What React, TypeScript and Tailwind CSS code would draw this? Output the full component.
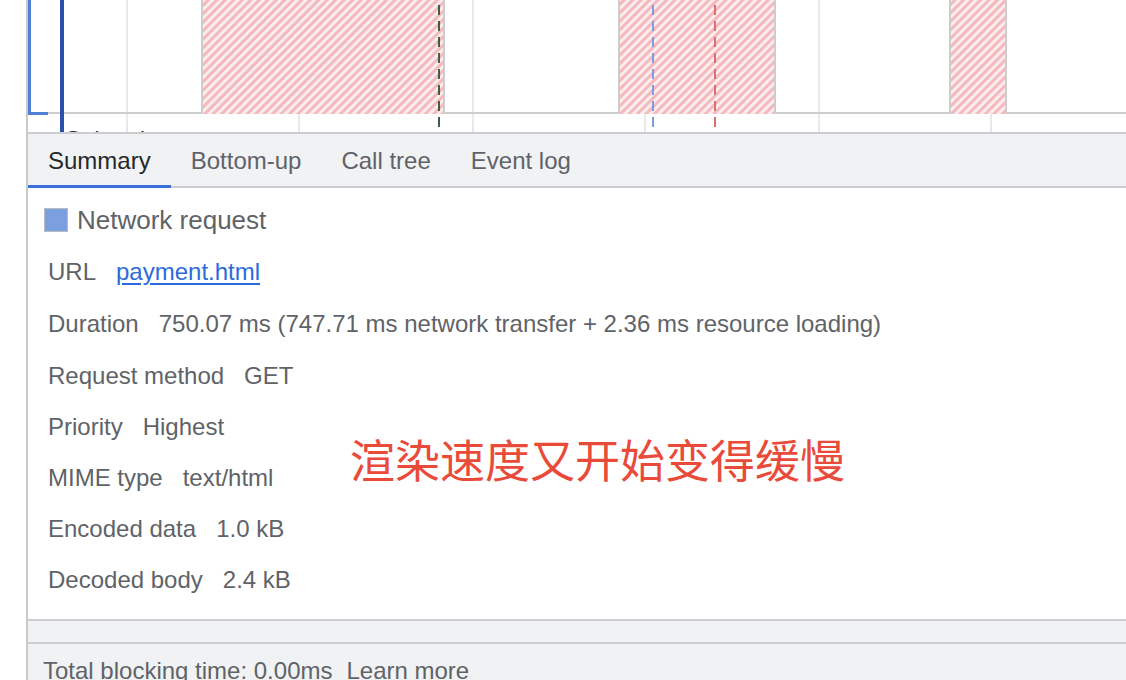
import React from "react"

const font = { fontFamily: '"Liberation Sans", Arial, sans-serif' }

const tabs = ["Summary", "Bottom-up", "Call tree", "Event log"]

const rows: { label: string; value: React.ReactNode; h: string }[] = [
  {
    label: "URL",
    value: (
      <span className="text-[#2d6bdc] underline underline-offset-[3px] decoration-[1.5px]">
        payment.html
      </span>
    ),
    h: "h-[52px]",
  },
  {
    label: "Duration",
    value: "750.07 ms (747.71 ms network transfer + 2.36 ms resource loading)",
    h: "h-[52px]",
  },
  { label: "Request method", value: "GET", h: "h-[51px]" },
  { label: "Priority", value: "Highest", h: "h-[51px]" },
  { label: "MIME type", value: "text/html", h: "h-[51px]" },
  { label: "Encoded data", value: "1.0 kB", h: "h-[51px]" },
  { label: "Decoded body", value: "2.4 kB", h: "h-[51px]" },
]

// timeline strip above the details panel
function Timeline() {
  const grid = [99, 271, 445, 617, 791, 963]
  const hatches = [
    [175, 241],
    [592, 155],
    [923, 55],
  ]
  return (
    <svg width="1098" height="132" className="block shrink-0" style={font}>
      <defs>
        <pattern
          id="hatch"
          width="6"
          height="6"
          patternUnits="userSpaceOnUse"
          patternTransform="rotate(45)"
        >
          <rect width="6" height="6" fill="#fcecee" />
          <rect width="3" height="6" fill="#f3b9bc" />
        </pattern>
      </defs>
      {grid.map((x) => (
        <line key={x} x1={x} y1="0" x2={x} y2="132" stroke="#e2e2e2" strokeWidth="1.5" />
      ))}
      {hatches.map(([x, w]) => (
        <rect key={x} x={x} y="0" width={w} height="114" fill="url(#hatch)" />
      ))}
      <path
        d="M20 113 H174 V0 M416 0 V113 H591 V0 M747 0 V113 H922 V0 M978 0 V113 H1098"
        fill="none"
        stroke="#cdcdcd"
        strokeWidth="2"
      />
      <line x1="411" y1="5" x2="411" y2="132" stroke="#3f5e48" strokeWidth="2" strokeDasharray="10 6" />
      <line x1="625" y1="5" x2="625" y2="132" stroke="#7d9de0" strokeWidth="2" strokeDasharray="10 6" />
      <line x1="687" y1="5" x2="687" y2="132" stroke="#d9706e" strokeWidth="2" strokeDasharray="10 6" />
      <rect x="0" y="0" width="3" height="115" fill="#4f80d8" />
      <rect x="0" y="112" width="20" height="3" fill="#4f80d8" />
      <rect x="32" y="0" width="4" height="132" fill="#2a50aa" />
      <text x="37" y="148" fontSize="24" fill="#333">
        Subtask
      </text>
    </svg>
  )
}

export default function App() {
  return (
    <div className="relative w-[1126px] h-[680px] overflow-hidden bg-white flex" style={font}>
      <div className="w-[26px] shrink-0 bg-white" />
      <div className="flex-1 flex flex-col border-l-2 border-[#c9c9c9] min-w-0">
        <Timeline />

        {/* tab bar */}
        <div className="h-[56px] shrink-0 flex bg-[#f1f2f4] border-t-2 border-b-2 border-[#cbcdd1]">
          {tabs.map((t, i) => (
            <div
              key={t}
              className={
                i === 0
                  ? "relative px-5 pt-[2px] flex items-center text-[24px] text-[#26282b]"
                  : "relative px-5 pt-[2px] flex items-center text-[24px] text-[#5f6368]"
              }
            >
              {t}
              {i === 0 && (
                <div className="absolute left-0 right-0 bottom-[-2px] h-[3px] bg-[#3a6fd9]" />
              )}
            </div>
          ))}
        </div>

        {/* summary details */}
        <div className="flex-1 flex flex-col pt-[6px] text-[24px] text-[#5f6368]">
          <div className="h-[52px] flex items-center pl-4">
            <div className="w-6 h-6 bg-[#7b9fdf] border border-[#b9bcc2]" />
            <span className="ml-[9px] text-[26px]">Network request</span>
          </div>
          {rows.map((r) => (
            <div key={r.label} className={`${r.h} flex items-center pl-5 gap-5 whitespace-nowrap`}>
              <span>{r.label}</span>
              <span>{r.value}</span>
            </div>
          ))}
        </div>

        <div className="h-[25px] shrink-0 bg-[#f1f2f4] border-t-2 border-b-2 border-[#cbcdd1]" />
        <div className="h-[36px] shrink-0 bg-[#f1f2f4] pt-[13px] pl-[15px] text-[24px] leading-[1.2] text-[#5f6368] whitespace-nowrap">
          <span>Total blocking time: 0.00ms</span>
          <span className="ml-[14px]">Learn more</span>
        </div>
      </div>

      <div
        className="absolute left-[350px] top-[436px] text-[45px] leading-none text-[#ea4a3a] whitespace-nowrap"
        style={{ fontFamily: '"Noto Sans CJK SC", sans-serif' }}
      >
        渲染速度又开始变得缓慢
      </div>
    </div>
  )
}
